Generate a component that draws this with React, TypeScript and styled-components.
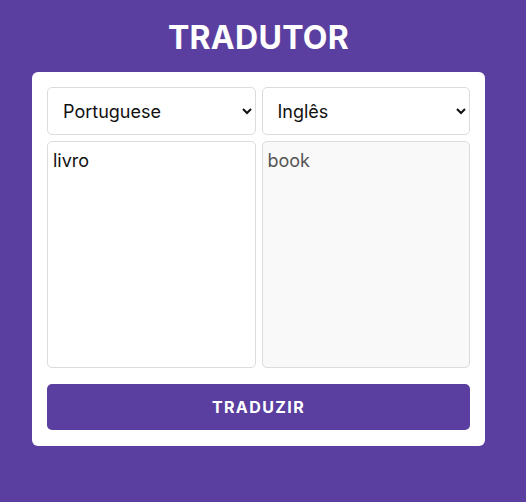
import styled, { createGlobalStyle } from 'styled-components';
import { useState } from 'react';

const GlobalStyle = createGlobalStyle`
    html, body {
        margin: 0;
        padding: 0;
        background-color: #5a3fa0;
        font-family: 'Inter', 'Noto Sans', sans-serif;
    }
    * {
        box-sizing: border-box;
    }
`;

export default function App(): JSX.Element {
    const [source, setSource] = useState('livro');
    const translated = 'book';

    return (
        <Page>
            <GlobalStyle />
            <Title>TRADUTOR</Title>
            <Card>
                <LangRow>
                    <LangSelect defaultValue="pt">
                        <option value="pt">Portuguese</option>
                        <option value="en">English</option>
                        <option value="es">Spanish</option>
                    </LangSelect>
                    <LangSelect defaultValue="en">
                        <option value="en">Inglês</option>
                        <option value="pt">Português</option>
                        <option value="es">Espanhol</option>
                    </LangSelect>
                </LangRow>
                <TextRow>
                    <TextBox value={source} onChange={(e) => setSource(e.target.value)} />
                    <TextBox value={translated} readOnly $output />
                </TextRow>
                <TranslateButton>TRADUZIR</TranslateButton>
            </Card>
        </Page>
    );
}

const Page = styled.main`
    width: 517px;
    min-height: 502px;
    padding-top: 14px;
    display: flex;
    flex-direction: column;
    align-items: center;
`;

const Title = styled.h1`
    margin: 0 0 10px;
    color: #fff;
    font-size: 32px;
    line-height: 48px;
    font-weight: 700;
    letter-spacing: 0.3px;
`;

const Card = styled.section`
    width: 453px;
    padding: 15px 15px 16px;
    background-color: #fff;
    border-radius: 6px;
    display: flex;
    flex-direction: column;
`;

const LangRow = styled.div`
    display: grid;
    grid-template-columns: 1fr 1fr;
    gap: 6px;
`;

const LangSelect = styled.select`
    height: 48px;
    padding: 0 8px 0 11px;
    border: 1px solid #dcdcdc;
    border-radius: 5px;
    background-color: #fff;
    color: #111;
    font-family: inherit;
    font-size: 18px;
`;

const TextRow = styled.div`
    display: grid;
    grid-template-columns: 1fr 1fr;
    gap: 6px;
    margin-top: 6px;
`;

const TextBox = styled.textarea<{ $output?: boolean }>`
    height: 227px;
    padding: 6px 5px;
    border: 1px solid #dcdcdc;
    border-radius: 5px;
    resize: none;
    outline: none;
    background-color: ${(p) => (p.$output ? '#f9f9f9' : '#fff')};
    color: ${(p) => (p.$output ? '#555' : '#111')};
    font-family: inherit;
    font-size: 18px;
    line-height: 26px;
`;

const TranslateButton = styled.button`
    margin-top: 16px;
    height: 46px;
    border: none;
    border-radius: 5px;
    background-color: #5a3fa0;
    color: #fff;
    font-family: inherit;
    font-size: 16px;
    font-weight: 700;
    letter-spacing: 1.4px;
    cursor: pointer;
`;
